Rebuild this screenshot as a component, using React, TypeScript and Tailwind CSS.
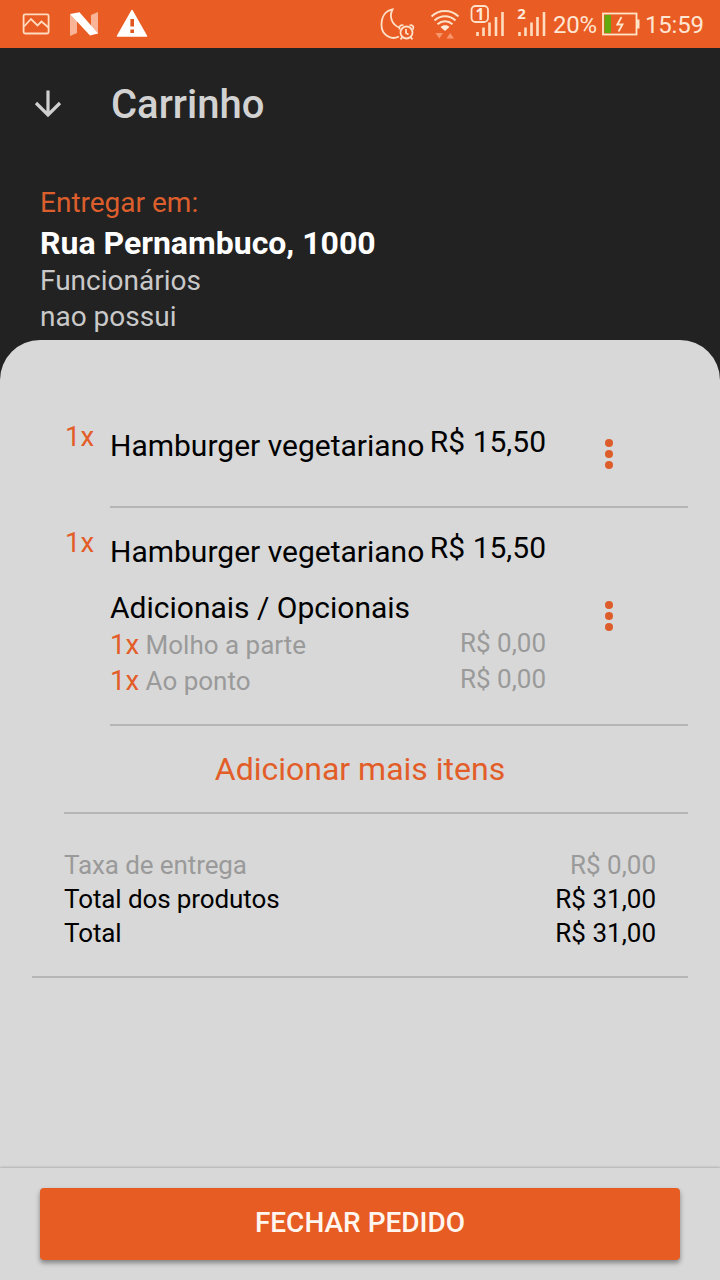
interface Option {
  qty: number
  name: string
  price: string
}

interface Item {
  qty: number
  name: string
  price: string
  options?: Option[]
}

const ITEMS: Item[] = [
  { qty: 1, name: 'Hamburger vegetariano', price: 'R$ 15,50' },
  {
    qty: 1,
    name: 'Hamburger vegetariano',
    price: 'R$ 15,50',
    options: [
      { qty: 1, name: 'Molho a parte', price: 'R$ 0,00' },
      { qty: 1, name: 'Ao ponto', price: 'R$ 0,00' },
    ],
  },
]

const TOTALS = [
  { label: 'Taxa de entrega', value: 'R$ 0,00', muted: true },
  { label: 'Total dos produtos', value: 'R$ 31,00', muted: false },
  { label: 'Total', value: 'R$ 31,00', muted: false },
]

function StatusBar() {
  return (
    <div className="flex h-12 shrink-0 items-center justify-between bg-[#e95c23] pl-5 pr-4 text-[24px] text-[#ffe6d3]">
      <div className="flex items-center gap-4">
        {/* Picture */}
        <svg width="32" height="48" viewBox="20 0 32 48" fill="none" stroke="#ffdcc0" strokeWidth="1.8">
          <rect x="23.6" y="14.3" width="25" height="19.2" rx="1.5" />
          <path d="M24 26.5 31 19 37.5 25.5 41.5 21.5 48.5 27.5" />
        </svg>
        {/* Nougat */}
        <svg width="32" height="48" viewBox="68 0 32 48">
          <path d="M70 14 77 16V33L70 36ZM98 12 91 15V33L98 34Z" fill="#f9b497" />
          <path d="M70 14 79.5 12.3 98 33.5 90 35.5Z" fill="#fff" />
        </svg>
        {/* Warning */}
        <svg width="32" height="48" viewBox="116 0 32 48">
          <path d="M132 10.5 146.5 36H117.5Z" fill="#fff" stroke="#fff" strokeWidth="1.5" strokeLinejoin="round" />
          <path d="M130.4 19h3.6v7.5h-3.6ZM130.4 29.5h3.6v3.4h-3.6Z" fill="#e0561f" />
        </svg>
      </div>

      <div className="flex items-center">
        {/* Do not disturb until alarm */}
        <svg className="mr-3" width="38" height="48" viewBox="378 0 38 48" fill="none" stroke="#ffe0c8" strokeWidth="1.8">
          <path d="M399 36.5C390 41 381.5 34 381.5 25C381.5 16 386 10.5 392.5 9.5C389 16 391.5 25 399.5 27.5" />
          <circle cx="406.5" cy="32.5" r="6" />
          <path d="M406 29V33L408.5 34.5M399.6 29.5C398.5 26 401 24.5 403.5 25.5M409.5 25.5C412 24.5 414.5 26.5 413 29.5M402.5 37 400.5 39.3M410.5 37 412.5 39.3" />
        </svg>
        {/* Wifi */}
        <svg className="mr-2.5" width="32" height="48" viewBox="428 0 32 48" fill="none">
          <g stroke="#ffe0c8" strokeWidth="2">
            <path d="M431.5 16.5C439 9 451 9 458.5 16.5" />
            <path d="M434.5 20.5C440.5 14.7 449.5 14.7 455.5 20.5" />
            <path d="M437.5 24.3C442 20.3 448 20.3 452.5 24.3" />
          </g>
          <path d="M440.5 27C443 24.8 447.5 24.8 449.5 27L445 31Z" fill="#ffe9d8" />
          <path d="M435.5 33H443L439.3 38.5ZM446.5 38.5H454L450.2 33Z" fill="#f7976d" />
        </svg>
        {/* SIM 1 */}
        <svg className="mr-2.5" width="36" height="48" viewBox="470 0 36 48">
          <rect x="471.5" y="6" width="16.5" height="16" rx="4" fill="none" stroke="#ffe0c8" strokeWidth="1.8" />
          <text x="480" y="19.5" textAnchor="middle" fontSize="15.5" fontWeight="700" fill="#ffe9d8" className="font-['Noto_Sans',sans-serif]">1</text>
          <path d="M477.5 36V32M483.5 36V27.5M489.5 36V22.5M496 36V17M502.5 36V12" stroke="#ffdcc0" strokeWidth="2.6" />
        </svg>
        {/* SIM 2 */}
        <svg className="mr-[5px]" width="32" height="48" viewBox="516 0 32 48">
          <text x="521.5" y="19" textAnchor="middle" fontSize="15" fontWeight="700" fill="#ffe9d8" className="font-['Noto_Sans',sans-serif]">2</text>
          <path d="M519.5 36V32M525.5 36V27.5M531.5 36V22.5M537.5 36V17M544 36V12" stroke="#ffdcc0" strokeWidth="2.6" />
        </svg>
        <span className="w-12 pt-0.5 leading-[50px] tracking-[-0.2px]">20%</span>
        {/* Battery */}
        <svg className="mr-1" width="40" height="48" viewBox="601 0 40 48">
          <rect x="603" y="13.5" width="33.5" height="21" fill="none" stroke="#ffe6c8" strokeWidth="1.8" />
          <path d="M637 19.5H639.5V28.5H637Z" fill="#ffe6c8" />
          <rect x="604.5" y="15" width="6.5" height="18" fill="#63a80c" />
          <path d="M621.5 17 617.3 24.5H622.5L618.5 31.5" fill="none" stroke="#ffe6c8" strokeWidth="1.8" />
        </svg>
        <span className="w-[59px] pt-0.5 leading-[50px] tracking-[-0.2px]">15:59</span>
      </div>
    </div>
  )
}

function CartItem({ item }: { item: Item }) {
  return (
    <div className="flex">
      <span className="w-[46px] pl-px pt-[17px] text-[27.5px] leading-9 text-[#e35d28]">{item.qty}x</span>
      <div className="flex min-h-[106px] flex-1 border-b-2 border-[#b5b5b5]">
        <div className="w-[436px]">
          <div className="flex justify-between whitespace-nowrap text-[30px] leading-10 text-black">
            <span className="pt-6">{item.name}</span>
            <span className="pt-5">{item.price}</span>
          </div>
          {item.options && (
            <div className="pb-[25px]">
              <p className="mt-[17px] text-[30px] leading-[38px] text-black">Adicionais / Opcionais</p>
              {item.options.map(opt => (
                <div key={opt.name} className="flex h-9 justify-between text-[26px] leading-9 text-[#9a9a9a]">
                  <span>
                    <span className="text-[27.5px] leading-none text-[#e35d28]">{opt.qty}x</span> {opt.name}
                  </span>
                  <span className="-mt-0.5">{opt.price}</span>
                </div>
              ))}
            </div>
          )}
        </div>
        <button className="ml-[59px] flex flex-col gap-[3px] self-center" aria-label="Opções do item">
          <span className="size-2 rounded-full bg-[#dc5c2a]" />
          <span className="size-2 rounded-full bg-[#dc5c2a]" />
          <span className="size-2 rounded-full bg-[#dc5c2a]" />
        </button>
      </div>
    </div>
  )
}

export default function App() {
  return (
    <div className="flex h-[1280px] w-[720px] flex-col overflow-hidden bg-[#222222] font-['Roboto',sans-serif]">
      <StatusBar />

      <header className="flex h-28 shrink-0 items-center gap-[47px] pl-8">
        <svg className="size-8" viewBox="0 0 32 32" fill="none" stroke="#d0d0d0" strokeWidth="3.2">
          <path d="M16 2.5V26.5M4 15 16 27 28 15" />
        </svg>
        <h1 className="pt-0.5 text-[40px] font-medium text-[#d2d2d2]">Carrinho</h1>
      </header>

      <section className="flex h-[180px] shrink-0 flex-col px-10 pt-[25px] text-[28px] leading-9 text-[#c9c9c9]">
        <span className="text-[#dc5e2c]">Entregar em:</span>
        <span className="-mb-0.5 text-[32px] font-bold leading-[44px] text-white">Rua Pernambuco, 1000</span>
        <span>Funcionários</span>
        <span>nao possui</span>
      </section>

      <main className="flex-1 rounded-t-[40px] bg-[#d8d8d8] pt-[62px]">
        <div className="pl-16 pr-8">
          {ITEMS.map((item, i) => (
            <CartItem key={i} item={item} />
          ))}
          <button className="flex h-[88px] w-full items-center justify-center border-b-2 border-[#b5b5b5] pr-8 text-[32px] text-[#e35d28]">
            Adicionar mais itens
          </button>
        </div>

        <div className="mx-8 border-b-2 border-[#b5b5b5] px-8 pb-[26px] pt-[34px] text-[26px] leading-[34px]">
          {TOTALS.map(row => (
            <div
              key={row.label}
              className={`flex justify-between ${row.muted ? 'text-[#9a9a9a]' : 'text-black'}`}
            >
              <span className="tracking-[-0.1px]">{row.label}</span>
              <span>{row.value}</span>
            </div>
          ))}
        </div>
      </main>

      <footer className="h-28 shrink-0 bg-[#d8d8d8] px-10 pt-5 shadow-[0_-1px_2px_rgba(0,0,0,0.18)]">
        <button className="h-[72px] w-full rounded-[4px] bg-[#e75c22] pb-0.5 text-[28px] font-medium text-[#fff6f0] shadow-[0_3px_5px_rgba(0,0,0,0.4)]">
          FECHAR PEDIDO
        </button>
      </footer>
    </div>
  )
}
